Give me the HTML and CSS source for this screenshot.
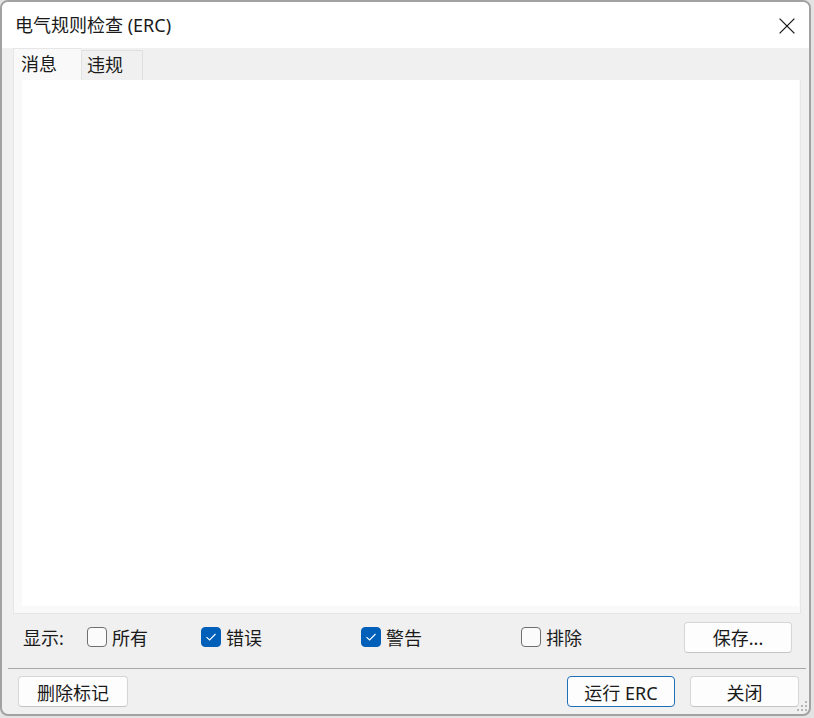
FILE: index.html
```html
<!DOCTYPE html>
<html lang="zh-CN">
<head>
    <meta charset="UTF-8">
    <title>电气规则检查 (ERC)</title>
    <link rel="stylesheet" href="styles.css">
</head>
<body>

    <div class="window">
        <!-- Title bar -->
        <div class="title-bar">
            <span class="title">电气规则检查 (ERC)</span>
            <span class="close-btn">
                <svg width="16" height="16" viewBox="0 0 16 16">
                    <path d="M0.6 0.6 L15.4 15.4 M15.4 0.6 L0.6 15.4" stroke="#1b1b1b" stroke-width="1.3" fill="none"/>
                </svg>
            </span>
        </div>

        <!-- Tabs -->
        <div class="tabs">
            <div class="tab active">消息</div>
            <div class="tab">违规</div>
        </div>
        <div class="tab-panel">
            <div class="message-list"></div>
        </div>

        <!-- Filter row -->
        <div class="filter-row">
            <span class="filter-label">显示:</span>
            <label class="check-item first"><span class="box"></span>所有</label>
            <label class="check-item"><span class="box checked"><svg width="12" height="10" viewBox="0 0 12 10"><path d="M1.5 5.2 L4.6 8 L10.5 2" stroke="#fff" stroke-width="1.1" fill="none"/></svg></span>错误</label>
            <label class="check-item"><span class="box checked"><svg width="12" height="10" viewBox="0 0 12 10"><path d="M1.5 5.2 L4.6 8 L10.5 2" stroke="#fff" stroke-width="1.1" fill="none"/></svg></span>警告</label>
            <label class="check-item"><span class="box"></span>排除</label>
            <button class="btn save-btn">保存...</button>
        </div>

        <div class="separator"></div>

        <!-- Bottom buttons -->
        <div class="bottom-row">
            <button class="btn clear-btn">删除标记</button>
            <button class="btn run-btn default">运行 ERC</button>
            <button class="btn close-dlg-btn">关闭</button>
        </div>

        <svg class="grip" width="12" height="12" viewBox="0 0 12 12">
            <rect x="9" y="1" width="2" height="2" fill="#b4b4b4"/>
            <rect x="5" y="5" width="2" height="2" fill="#b4b4b4"/>
            <rect x="9" y="5" width="2" height="2" fill="#b4b4b4"/>
            <rect x="1" y="9" width="2" height="2" fill="#b4b4b4"/>
            <rect x="5" y="9" width="2" height="2" fill="#b4b4b4"/>
            <rect x="9" y="9" width="2" height="2" fill="#b4b4b4"/>
        </svg>
    </div>

</body>
</html>
```

FILE: styles.css
```css
body {
    margin: 0;
    background-color: #e3e3e3;
    font-family: "Noto Sans", "Noto Sans CJK SC", sans-serif;
    font-size: 18px;
    color: #1a1a1a;
}

.window {
    position: relative;
    box-sizing: border-box;
    width: 811px;
    height: 716px;
    border: 2px solid #a2a2a2;
    border-radius: 8px;
    background-color: #f0f0f0;
    overflow: hidden;
}

/* Title bar */
.title-bar {
    height: 46px;
    background-color: #fff;
    display: flex;
    align-items: center;
    justify-content: space-between;
    padding: 0 13px;
}

.title {
    font-size: 18px;
    line-height: 24px;
}

.close-btn {
    display: flex;
    margin-right: 1px;
    margin-top: 2px;
}

/* Tabs */
.tabs {
    display: flex;
    align-items: flex-end;
    height: 32px;
    padding-left: 11px;
}

.tab {
    box-sizing: border-box;
    height: 30px;
    width: 62px;
    padding-left: 5px;
    line-height: 28px;
    background-color: #f0f0f0;
    border: 1px solid #e0e0e0;
    border-bottom: none;
}

.tab.active {
    height: 32px;
    width: 68px;
    padding-left: 7px;
    line-height: 30px;
    background-color: #f9f9f9;
    border-color: #e6e6e6;
    border-right: none;
}

.tab-panel {
    box-sizing: border-box;
    height: 534px;
    margin-left: 11px;
    margin-right: 8px;
    padding: 0 1px 7px 8px;
    background-color: #f9f9f9;
    border: 1px solid #e6e6e6;
    border-top: none;
}

.message-list {
    height: 100%;
    background-color: #fff;
}

/* Filter row */
.filter-row {
    display: flex;
    align-items: center;
    height: 46px;
    padding: 0 17px 8px 21px;
}

.filter-label {
    width: 64px;
}

.check-item {
    display: flex;
    align-items: center;
    width: 160px;
}

.check-item.first {
    width: 114px;
}

.box {
    box-sizing: border-box;
    width: 20px;
    height: 20px;
    margin-right: 5px;
    border: 1px solid #6f6f6f;
    border-radius: 4px;
    background-color: #fbfbfb;
    display: flex;
    align-items: center;
    justify-content: center;
}

.box.checked {
    background-color: #005fb8;
    border-color: #005fb8;
}

.btn {
    box-sizing: border-box;
    height: 31px;
    padding: 0;
    font-family: inherit;
    font-size: 18px;
    color: #1a1a1a;
    background-color: #fdfdfd;
    border: 1px solid #d6d6d6;
    border-bottom-color: #c4c4c4;
    border-radius: 4px;
}

.save-btn {
    width: 108px;
    margin-left: auto;
}

.separator {
    height: 1px;
    margin: 0 3px 0 6px;
    background-color: #a8a8a8;
}

/* Bottom buttons */
.bottom-row {
    display: flex;
    padding: 7px 10px 0 16px;
}

.clear-btn {
    width: 110px;
}

.run-btn {
    width: 108px;
    margin-left: auto;
}

.btn.default {
    border: 1px solid #1f6fb8;
}

.close-dlg-btn {
    width: 109px;
    margin-left: 15px;
}

.grip {
    position: absolute;
    right: 1px;
    bottom: 2px;
}
```
